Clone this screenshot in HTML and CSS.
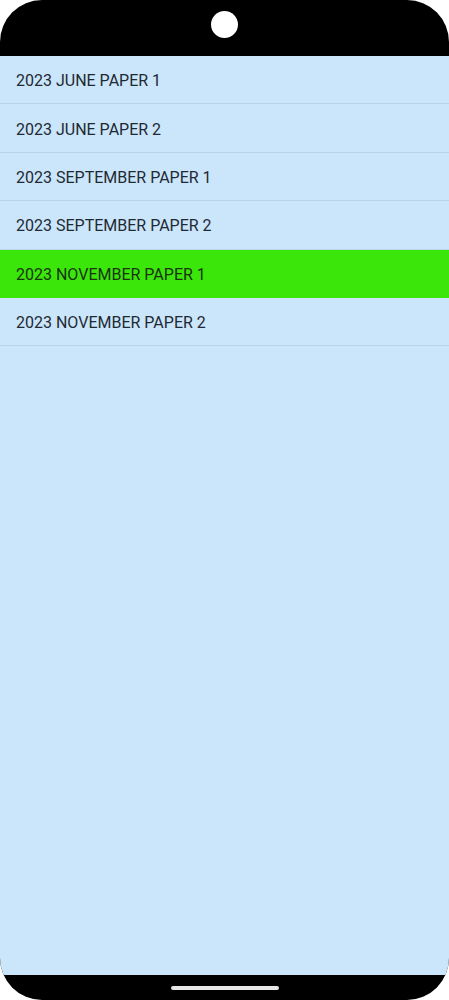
FILE: index.html
```html
<!DOCTYPE html>
<html>
<head>
<meta charset="utf-8">
<link rel="stylesheet" href="styles.css">
</head>
<body>
<div class="phone">
  <div class="status"><div class="camera"></div></div>
  <div class="screen">
    <div class="row">2023 JUNE PAPER 1</div>
    <div class="row">2023 JUNE PAPER 2</div>
    <div class="row">2023 SEPTEMBER PAPER 1</div>
    <div class="row">2023 SEPTEMBER PAPER 2</div>
    <div class="row active">2023 NOVEMBER PAPER 1</div>
    <div class="row">2023 NOVEMBER PAPER 2</div>
  </div>
  <div class="nav"><div class="handle"></div></div>
</div>
</body>
</html>
```
FILE: styles.css
```css
html, body { margin: 0; padding: 0; background: #ffffff; }
.phone {
  width: 449px;
  height: 1000px;
  background: #000000;
  border-radius: 42px;
  overflow: hidden;
  display: flex;
  flex-direction: column;
}
.status {
  height: 56px;
  flex: none;
  display: flex;
  justify-content: center;
  align-items: flex-start;
}
.camera {
  width: 27px;
  height: 27px;
  border-radius: 50%;
  background: #ffffff;
  margin-top: 11px;
}
.screen {
  flex: 1;
  background: #cbe5fb;
  display: flex;
  flex-direction: column;
}
.row {
  height: 48.4px;
  flex: none;
  box-sizing: border-box;
  border-bottom: 1px solid #b9d4ea;
  padding-left: 16px;
  padding-top: 2px;
  display: flex;
  align-items: center;
  font-family: Roboto, "Noto Sans", sans-serif;
  font-size: 16px;
  color: #1e2a33;
}
.row.active {
  background: #3be60b;
  color: #1a3310;
  border-bottom-color: #3be60b;
}
.nav {
  height: 25px;
  flex: none;
  display: flex;
  justify-content: center;
  align-items: center;
}
.handle {
  width: 108px;
  height: 4px;
  border-radius: 2px;
  background: #e6e6e6;
  margin-top: 1px;
}
```
